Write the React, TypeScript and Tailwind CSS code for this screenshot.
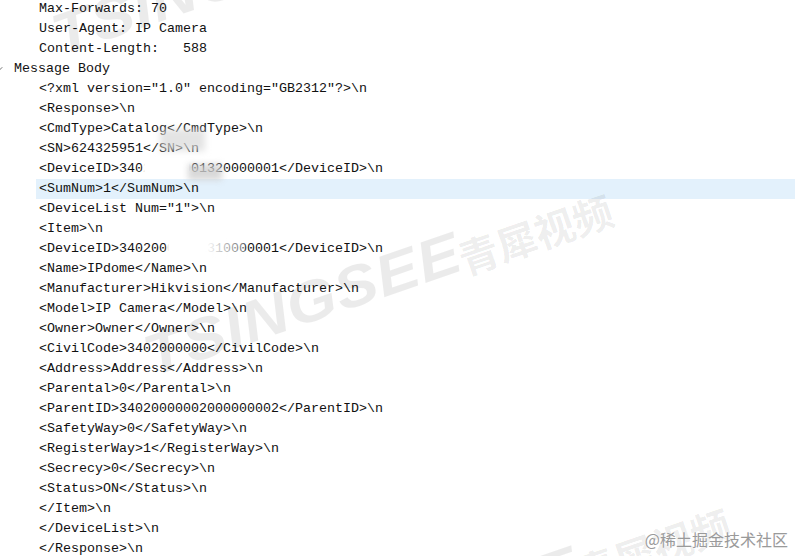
import { ChevronDown } from "lucide-react";

type Line = {
  text: string;
  level: 0 | 1;
  selected?: boolean;
  open?: boolean;
};

const lines: Line[] = [
  { text: "Max-Forwards: 70", level: 1 },
  { text: "User-Agent: IP Camera", level: 1 },
  { text: "Content-Length:   588", level: 1 },
  { text: "Message Body", level: 0, open: true },
  { text: '<?xml version="1.0" encoding="GB2312"?>\\n', level: 1 },
  { text: "<Response>\\n", level: 1 },
  { text: "<CmdType>Catalog</CmdType>\\n", level: 1 },
  { text: "<SN>624325951</SN>\\n", level: 1 },
  { text: "<DeviceID>34020000001320000001</DeviceID>\\n", level: 1 },
  { text: "<SumNum>1</SumNum>\\n", level: 1, selected: true },
  { text: '<DeviceList Num="1">\\n', level: 1 },
  { text: "<Item>\\n", level: 1 },
  { text: "<DeviceID>34020000001310000001</DeviceID>\\n", level: 1 },
  { text: "<Name>IPdome</Name>\\n", level: 1 },
  { text: "<Manufacturer>Hikvision</Manufacturer>\\n", level: 1 },
  { text: "<Model>IP Camera</Model>\\n", level: 1 },
  { text: "<Owner>Owner</Owner>\\n", level: 1 },
  { text: "<CivilCode>3402000000</CivilCode>\\n", level: 1 },
  { text: "<Address>Address</Address>\\n", level: 1 },
  { text: "<Parental>0</Parental>\\n", level: 1 },
  { text: "<ParentID>34020000002000000002</ParentID>\\n", level: 1 },
  { text: "<SafetyWay>0</SafetyWay>\\n", level: 1 },
  { text: "<RegisterWay>1</RegisterWay>\\n", level: 1 },
  { text: "<Secrecy>0</Secrecy>\\n", level: 1 },
  { text: "<Status>ON</Status>\\n", level: 1 },
  { text: "</Item>\\n", level: 1 },
  { text: "</DeviceList>\\n", level: 1 },
  { text: "</Response>\\n", level: 1 },
];

// faint diagonal logo stamped over the capture
const Watermark = ({ className }: { className: string }) => (
  <div
    className={`absolute -translate-x-1/2 -translate-y-1/2 -rotate-[19deg] whitespace-nowrap flex items-end text-black/[0.08] select-none pointer-events-none ${className}`}
  >
    <span className="font-['Liberation_Sans',sans-serif] font-black italic text-[58px] leading-none tracking-[1px] scale-x-110">
      TSINGSEE
    </span>
    <span className="font-['Noto_Sans_CJK_SC',sans-serif] font-bold text-[40px] leading-none ml-3">
      青犀视频
    </span>
  </div>
);

export default function App() {
  return (
    <div className="relative w-[795px] h-[556px] overflow-hidden bg-white font-['Liberation_Mono',monospace] text-[13.33px] text-[#111]">
      <div className="flex flex-col -mt-px">
        {lines.map((line, i) =>
          line.level === 0 ? (
            <div key={i} className="h-5 flex items-center whitespace-pre">
              <ChevronDown className="w-3 h-3 -ml-[7px] mr-[9px] text-[#444]" strokeWidth={1.5} />
              <span>{line.text}</span>
            </div>
          ) : (
            <div
              key={i}
              className={`h-5 flex items-center ml-[36px] pl-[3px] whitespace-pre ${
                line.selected ? "bg-[#e3f1fc]" : ""
              }`}
            >
              {line.text}
            </div>
          ),
        )}
      </div>

      {/* redacted bits */}
      <div className="absolute left-[160px] top-[129px] w-[45px] h-[22px] bg-[#d8d8d8]/70 blur-[3px]" />
      <div className="absolute left-[143px] top-[160px] w-[48px] h-[17px] bg-white blur-[1px]" />
      <div className="absolute left-[188px] top-[164px] w-[34px] h-[16px] bg-[#cfcfcf]/80 blur-[3px]" />
      <div className="absolute left-[167px] top-[240px] w-[78px] h-[17px] bg-gradient-to-r from-white via-white to-white/40 blur-[1px]" />

      <Watermark className="left-[384px] top-[276px]" />
      <Watermark className="left-[292px] top-[-45px]" />
      <Watermark className="left-[502px] top-[590px]" />

      <div className="absolute right-[7px] bottom-[5px] font-['Noto_Sans_CJK_SC',sans-serif] text-[16px] text-[#9a9a9a] [text-shadow:0_0_2px_#fff]">
        @稀土掘金技术社区
      </div>
    </div>
  );
}
